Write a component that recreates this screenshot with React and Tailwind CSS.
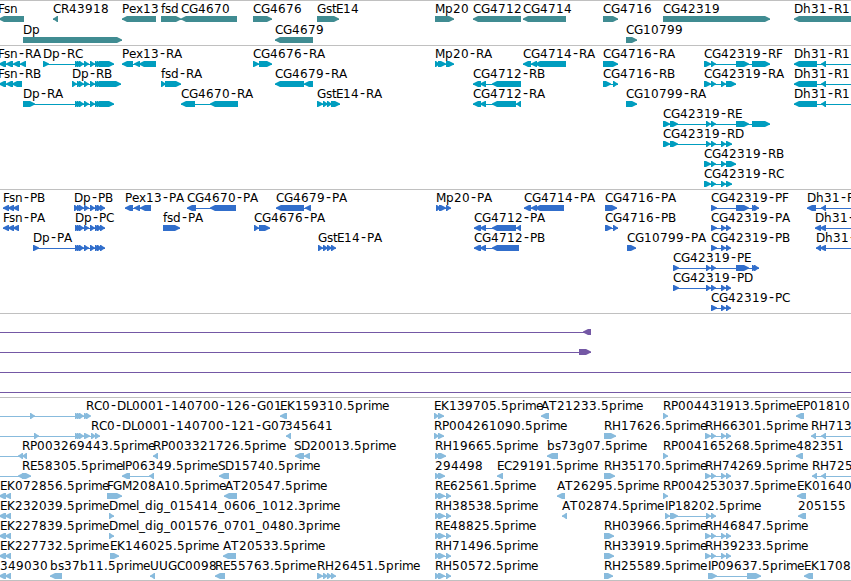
import React from "react";

// Horizontal advance of each character in track labels.
const ADVANCE = {
  A: 8, B: 7, C: 8, D: 9, E: 7, F: 6, G: 9, H: 9, I: 3, K: 8, L: 6, M: 10, P: 7, R: 8, S: 7, T: 8, U: 9,
  b: 8, d: 8, e: 7, f: 4, g: 8, h: 8, i: 3, l: 3, m: 11, n: 8, p: 8, r: 5, s: 6, t: 4, x: 7,
  "-": 7, "_": 6, ".": 4,
};

const glyphPositions = (text, start) => {
  let x = start;
  return [...text]
    .map((ch) => {
      const at = ch === "-" ? x + 1 : x;
      x += ADVANCE[ch] ?? 8;
      return at;
    })
    .join(" ");
};

const L = "L";
const R = "R";
// Exons shorter than this are still drawn this wide.
const MIN_EXON = 5;
// A feature: label, label x, direction, exons, line start, line end
const f = (label, x, dir, exons, from, to) => ({ label, x, dir, exons, from, to });

const DP = [[75, 77], [77, 79], [79, 84], [84, 89], [90, 95], [95, 97], [97, 99]];
const DP_P = [...DP, [100, 105]];
const FSN_P = [[3, 9], [8, 14], [13, 19]];
const DH = [[794, 817], [821, 826]];
const A42 = [[704, 711], [711, 716]];
const MID = [[706, 711], [711, 716]];
const END = [[721, 726], [726, 731]];
const PEND = [[736, 749], [752, 757], [754, 759]];
const RH = [[705, 711], [711, 716], ...END];
const MP3 = [[435, 440], [438, 445], [446, 451]];
const EK = [[-1, 6], [5, 11]];
const GST = [[318, 323], [323, 328], [327, 332], [331, 336]];

const genes = [
  [
    f("Fsn", -2, L, [[-1, 24]]), f("CR43918", 53, L, [[53, 58]]), f("Pex13", 122, L, [[122, 156]]),
    f("fsd", 161, R, [[161, 181]]), f("CG4670", 181, L, [[181, 237]]), f("CG4676", 253, R, [[253, 272]]),
    f("GstE14", 317, R, [[317, 339]]), f("Mp20", 435, R, [[435, 454]]), f("CG4712", 473, L, [[473, 521]]),
    f("CG4714", 523, L, [[523, 566]]), f("CG4716", 603, R, [[603, 618]]), f("CG42319", 663, R, [[663, 770]]),
    f("Dh31-R1", 794, L, [[794, 860]]),
  ],
  [f("Dp", 23, R, [[23, 122]]), f("CG4679", 275, L, [[275, 313]]), f("CG10799", 626, R, [[626, 637]])],
];

const transcripts = [
  [
    f("Fsn-RA", -2, L, [[-1, 6], [6, 13], [13, 20], [20, 26]]), f("Dp-RC", 43, R, [[43, 49], ...DP, [99, 114]]),
    f("Pex13-RA", 122, L, [[122, 133], [134, 140], [139, 156]]), f("CG4676-RA", 253, R, [[253, 259], [259, 272]]),
    f("Mp20-RA", 435, R, [[435, 440], [438, 446], [446, 454]]),
    f("CG4714-RA", 523, L, [[523, 531], [531, 537], [535, 566]]), f("CG4716-RA", 603, R, [[603, 618]]),
    f("CG42319-RF", 704, R, [...A42, [736, 749], [752, 770]]), f("Dh31-R1-", 794, L, DH, 794, 851),
  ],
  [
    f("Fsn-RB", -2, L, [[-1, 6], [6, 13], [12, 22]]), f("Dp-RB", 72, R, [[72, 77], ...DP.slice(1), [99, 121]]),
    f("fsd-RA", 161, R, [[161, 165], [165, 181]]), f("CG4679-RA", 275, L, [[275, 304], [304, 313]]),
    f("CG4712-RB", 473, L, [[473, 481], [480, 486], [492, 521]]), f("CG4716-RB", 603, R, [[603, 611], [613, 618]]),
    f("CG42319-RA", 704, R, [...A42, [721, 726], [726, 736]]), f("Dh31-R1-", 794, L, DH, 794, 851),
  ],
  [
    f("Dp-RA", 23, R, [[23, 35], ...DP, [99, 114]]), f("CG4670-RA", 181, L, [[181, 195], [210, 238]]),
    f("GstE14-RA", 317, R, [[317, 323], [323, 328], [327, 332], [331, 340]]),
    f("CG4712-RA", 473, L, [[473, 481], [480, 486], [492, 516], [516, 521]]), f("CG10799-RA", 626, R, [[626, 637]]),
    f("Dh31-R1-", 794, L, DH, 794, 851),
  ],
  [f("CG42319-RE", 663, R, [[663, 670], [670, 678], ...MID, [736, 749], [752, 770]])],
  [f("CG42319-RD", 663, R, [[663, 670], [670, 678], ...MID, [721, 726], [726, 732]])],
  [f("CG42319-RB", 704, R, [...A42, [721, 726], [726, 736]])],
  [f("CG42319-RC", 704, R, [...A42, [721, 726], [726, 732]])],
];

const proteins = [
  [
    f("Fsn-PB", 3, L, FSN_P), f("Dp-PB", 74, R, [[74, 77], ...DP_P.slice(1)]),
    f("Pex13-PA", 125, L, [[125, 133], [134, 140], [140, 151]]), f("CG4670-PA", 187, L, [[187, 196], [210, 236]]),
    f("CG4679-PA", 276, L, [[276, 304], [305, 311]]), f("Mp20-PA", 436, R, [[436, 441], [439, 446], [446, 451]]),
    f("CG4714-PA", 524, L, [[524, 531], [531, 537], [535, 564]]), f("CG4716-PA", 605, R, [[605, 617]]),
    f("CG42319-PF", 711, R, [[711, 717], ...PEND]), f("Dh31-R", 807, L, [[807, 816], [821, 826]], 807, 851),
  ],
  [
    f("Fsn-PA", 3, L, FSN_P), f("Dp-PC", 75, R, DP_P), f("fsd-PA", 163, R, [[163, 180]]),
    f("CG4676-PA", 254, R, [[254, 259], [259, 270]]),
    f("CG4712-PA", 474, L, [[474, 481], [480, 486], [492, 516], [516, 521]]),
    f("CG4716-PB", 605, R, [[605, 612], [613, 618]]), f("CG42319-PA", 711, R, [[711, 717], ...END]),
    f("Dh31-", 815, L, [[815, 821], [820, 826]], 815, 851),
  ],
  [
    f("Dp-PA", 33, R, [[33, 39], ...DP_P]), f("GstE14-PA", 318, R, GST),
    f("CG4712-PB", 474, L, [[474, 481], [480, 486], [492, 519]]), f("CG10799-PA", 627, R, [[627, 636]]),
    f("CG42319-PB", 711, R, [[711, 717], ...END]), f("Dh31-", 816, L, [[816, 821], [820, 826]], 816, 851),
  ],
  [f("CG42319-PE", 673, R, [[673, 679], ...MID, ...PEND])],
  [f("CG42319-PD", 673, R, [[673, 679], ...MID, ...END])],
  [f("CG42319-PC", 711, R, [[711, 717], ...END])],
];

const insertions = [
  [f("", 0, L, [[583, 591]], 0, 591)],
  [f("", 0, R, [[579, 591]], 0, 591)],
  [f("", 0, R, [], 0, 851)],
  [f("", 0, R, [], 0, 851)],
];

const ests = [
  [
    f("RC0-DL0001-140700-126-G01", 86, R, [[30, 35], [75, 77], [77, 79], [79, 84], [84, 89], [86, 91]], 0, 90),
    f("EK159310.5prime", 280, L, [[280, 287]]), f("EK139705.5prime", 434, R, [[434, 439], [438, 444]]),
    f("AT21233.5prime", 541, L, [[541, 549]]), f("RP004431913.5prime", 663, R, [[663, 668]]),
    f("EP01810", 796, L, [[796, 804]]),
  ],
  [
    f("RC0-DL0001-140700-121-G07", 91, R, [[34, 39], [75, 77], [77, 79], [79, 84], [84, 90], [91, 96], [95, 100]], 0, 100),
    f("345641", 285, L, [[286, 291]]), f("RP004261090.5prime", 434, R, [[434, 439], [438, 444]]),
    f("RH17626.5prime", 604, R, [[604, 616]]), f("RH66301.5prime", 705, R, RH),
    f("RH713", 811, L, [[811, 816], [821, 826]], 811, 851),
  ],
  [
    f("RP003269443.5prime", 22, L, [[18, 23], [22, 27]], 0, 27), f("RP003321726.5prime", 153, L, [[153, 158]]),
    f("SD20013.5prime", 294, L, [[295, 304], [304, 310]]), f("RH19665.5prime", 435, R, [[435, 440], [438, 446]]),
    f("bs73g07.5prime", 547, L, [[547, 558]]), f("RP004165268.5prime", 663, R, [[663, 668]]),
    f("482351", 796, L, [[796, 803]]),
  ],
  [
    f("RE58305.5prime", 22, L, [[18, 25]], 0, 25), f("", 22, R, [[22, 31]]),
    f("IP06349.5prime", 122, L, [[122, 130], [149, 154]]), f("SD15740.5prime", 218, L, [[219, 229]]),
    f("294498", 435, R, [[435, 440], [438, 445]]), f("EC29191.5prime", 497, L, [[497, 503]]),
    f("RH35170.5prime", 604, R, [[604, 615]]), f("RH74269.5prime", 705, R, RH),
    f("RH725", 812, L, [[812, 817], [821, 826]], 812, 851),
  ],
  [
    f("EK072856.5prime", 0, L, EK), f("FGM208A10.5prime", 107, R, [[107, 122]]), f("AT20547.5prime", 225, L, [[224, 237]]),
    f("RE62561.5prime", 435, R, MP3), f("AT26295.5prime", 557, L, [[557, 565]]),
    f("RP004253037.5prime", 663, R, [[663, 668]]), f("EK01640", 797, L, [[797, 806]]),
  ],
  [
    f("EK232039.5prime", 0, L, EK), f("Dmel_dig_015414_0606_1012.3prime", 109, R, [[109, 114]]),
    f("RH38538.5prime", 435, R, MP3), f("AT02874.5prime", 562, L, [[562, 567]]),
    f("IP18202.5prime", 665, R, [[665, 670], [670, 678], ...MID]), f("205155", 798, L, [[798, 806]]),
  ],
  [
    f("EK227839.5prime", 0, L, EK), f("Dmel_dig_001576_0701_0480.3prime", 109, R, [[109, 114]]),
    f("RE48825.5prime", 435, R, MP3), f("RH03966.5prime", 604, R, [[604, 614]]), f("RH46847.5prime", 705, R, RH),
  ],
  [
    f("EK227732.5prime", 0, L, EK), f("EK146025.5prime", 110, R, [[110, 119]]), f("AT20533.5prime", 223, L, [[223, 236]]),
    f("RH71496.5prime", 435, R, MP3), f("RH33919.5prime", 604, R, [[604, 614]]), f("RH39233.5prime", 705, R, RH),
  ],
  [
    f("349030", 0, L, EK), f("bs37b11.5prime", 50, L, [[50, 62]]), f("UUGC0098", 150, L, [[150, 155]]),
    f("RE55763.5prime", 215, L, [[215, 225]]), f("RH26451.5prime", 317, R, [[317, 323], ...GST.slice(1)]),
    f("RH50572.5prime", 435, R, MP3), f("RH25589.5prime", 604, R, [[604, 613]]),
    f("IP09637.5prime", 708, R, [[708, 717], [747, 761]]), f("EK1708", 804, L, [[804, 813]]),
  ],
];

// Blunt body with a rounded arrow head at the 3' end.
function Exon({ x0, x1, dir }) {
  const w = Math.max(x1 - x0, MIN_EXON);
  const head = Math.min(w - 1, 5);
  const base = dir === R ? x0 : x0 + w;
  const tip = dir === R ? x0 + w : x0;
  const s = dir === R ? -1 : 1;
  const points = [
    [base, 14],
    [tip + s * head, 14],
    [tip + s * 2, 15.4],
    [tip, 16.5],
    [tip, 17.5],
    [tip + s * 2, 18.6],
    [tip + s * head, 20],
    [base, 20],
  ];
  return <polygon points={points.map((p) => p.join(",")).join(" ")} />;
}

// Hyphens are set slightly larger than the rest so that they fill their cell.
function Label({ text, x }) {
  return (
    <text x={glyphPositions(text, x)} y={11} className="fill-black">
      {text.split(/(-)/).map((part, i) =>
        part === "-" ? (
          <tspan key={i} className="text-[14px]">
            -
          </tspan>
        ) : (
          part
        )
      )}
    </text>
  );
}

function Feature({ label, x, dir, exons, from, to }) {
  const start = from ?? exons[0][0];
  const end = to ?? exons[exons.length - 1][1];
  return (
    <g>
      <rect x={start} y={17} width={end - start} height={1} shapeRendering="crispEdges" />
      {exons.map(([x0, x1], i) => (
        <Exon key={i} x0={x0} x1={x1} dir={dir} />
      ))}
      {label && <Label text={label} x={x} />}
    </g>
  );
}

function Track({ rows, className }) {
  return (
    <section className={`flex shrink-0 flex-col border-t border-[#c0c0c0] pt-px ${className}`}>
      {rows.map((row, i) => (
        <svg key={i} width="851" height="20" viewBox="0 0 851 20" fill="currentColor" className="block shrink-0 overflow-visible">
          {row.map((feature, j) => (
            <Feature key={j} {...feature} />
          ))}
        </svg>
      ))}
    </section>
  );
}

export default function App() {
  return (
    <main className="flex h-[581px] w-[851px] flex-col overflow-hidden border-b border-[#c0c0c0] bg-white font-['DejaVu_Sans',sans-serif] text-[12px]">
      <Track rows={genes} className="h-[45px] gap-px text-[#408c92]" />
      <Track rows={transcripts} className="h-[144px] text-[#009dbf]" />
      <Track rows={proteins} className="h-[124px] text-[#316ecb]" />
      <Track rows={insertions} className="h-[84px] text-[#7458a5]" />
      <Track rows={ests} className="h-[183px] text-[#88bbdd]" />
    </main>
  );
}
